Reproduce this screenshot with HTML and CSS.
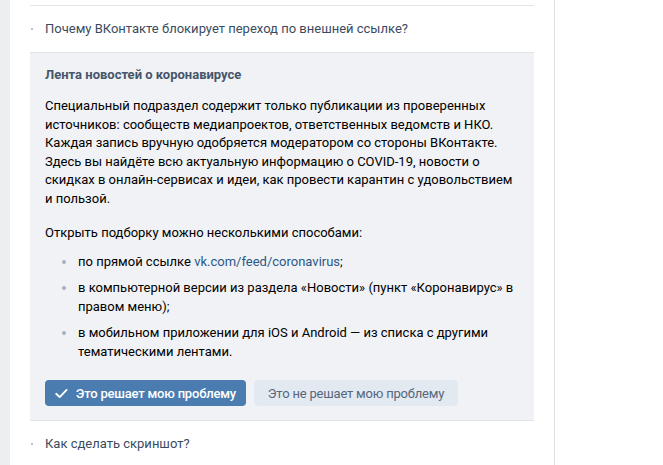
FILE: index.html
```html
<!DOCTYPE html>
<html>

<head>
    <title>Помощь — Лента новостей о коронавирусе</title>
    <link rel="stylesheet" href="styles.css">
</head>

<body>
    <div class="page">
        <div class="side"></div>

        <div class="panel">
            <div class="faq-item">
                <div class="question">Почему ВКонтакте блокирует переход по внешней ссылке?</div>
            </div>

            <div class="faq-item open">
                <div class="answer">
                    <div class="answer-title">Лента новостей о коронавирусе</div>

                    <p>Специальный подраздел содержит только публикации из проверенных источников: сообществ медиапроектов, ответственных ведомств и НКО. Каждая запись вручную одобряется модератором со стороны ВКонтакте. Здесь вы найдёте всю актуальную информацию о COVID-19, новости о скидках в онлайн-сервисах и идеи, как провести карантин с удовольствием и пользой.</p>

                    <p>Открыть подборку можно несколькими способами:</p>

                    <ul class="ways">
                        <li>по прямой ссылке <a href="#">vk.com/feed/coronavirus</a>;</li>
                        <li>в компьютерной версии из раздела «Новости» (пункт «Коронавирус» в правом меню);</li>
                        <li>в мобильном приложении для iOS и Android — из списка с другими тематическими лентами.</li>
                    </ul>

                    <div class="buttons">
                        <button class="btn btn-yes">
                            <svg width="13" height="11" viewBox="0 0 13 11">
                                <path d="M1.2 5.8 L4.8 9.2 L11.8 1.8" fill="none" stroke="#fff" stroke-width="1.9" stroke-linecap="round" stroke-linejoin="round"/>
                            </svg>
                            Это решает мою проблему
                        </button>
                        <button class="btn btn-no">Это не решает мою проблему</button>
                    </div>
                </div>
            </div>

            <div class="faq-item">
                <div class="question">Как сделать скриншот?</div>
            </div>
        </div>
    </div>
</body>

</html>
```

FILE: styles.css
```css
body {
    margin: 0;
    background-color: #ffffff;
    font-family: Roboto, "Open Sans", sans-serif;
    font-size: 13px;
    line-height: 19px;
    color: #000000;
}

.page {
    display: flex;
    min-height: 465px;
}

.side {
    width: 10px;
    background-color: #edeef0;
}

.panel {
    width: 504px;
    padding: 5px 20px 0 20px;
    border-right: 1px solid #dce1e6;
}

.faq-item {
    border-top: 1px solid #e1e4e9;
}

.question {
    position: relative;
    padding: 13px 0 14px 15px;
    color: #3a4b60;
}

.question:before {
    content: "";
    position: absolute;
    left: 1px;
    top: 22px;
    width: 2px;
    height: 2px;
    background-color: #b8c4d1;
}

.answer {
    background-color: #f0f2f5;
    padding: 12px 15px 14px 15px;
}

.answer-title {
    font-weight: bold;
    color: #45556b;
}

.answer p {
    margin: 13px 0 0 0;
    line-height: 18.6px;
}

.answer p + p {
    margin-top: 15.5px;
}

.ways {
    list-style: none;
    margin: 9.5px 0 0 0;
    padding: 0 0 0 33px;
}

.ways li {
    position: relative;
    margin-bottom: 7px;
}

.ways li:last-child {
    margin-bottom: 0;
}

.ways li:before {
    content: "";
    position: absolute;
    left: -16px;
    top: 8px;
    width: 4px;
    height: 4px;
    border-radius: 50%;
    background-color: #a3b1c2;
}

.ways a {
    color: #2a5885;
    text-decoration: none;
}

.buttons {
    display: flex;
    gap: 8px;
    margin-top: 19px;
}

.btn {
    height: 26px;
    border: none;
    border-radius: 4px;
    font-family: Roboto, "Open Sans", sans-serif;
    font-size: 13px;
    letter-spacing: -0.2px;
    white-space: nowrap;
    cursor: pointer;
}

.btn-yes {
    display: flex;
    align-items: center;
    justify-content: center;
    gap: 8px;
    width: 201px;
    padding: 0 10px;
    background-color: #4a7cb0;
    color: #ffffff;
    font-weight: 500;
}

.btn-no {
    width: 204px;
    padding: 0 10px;
    background-color: #e3e9f0;
    color: #55677d;
}
```
